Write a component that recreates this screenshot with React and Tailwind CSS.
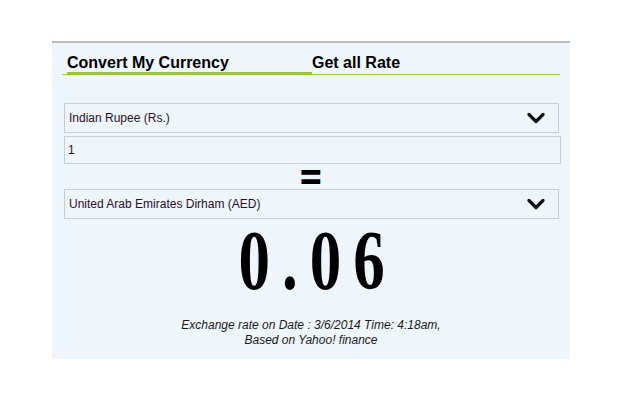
import React from 'react';

function Chevron() {
  return (
    <svg width="18" height="12" viewBox="0 0 18 12" fill="none">
      <path d="M2 2.5 L9 9.5 L16 2.5" stroke="#111" strokeWidth="3.2" strokeLinecap="round" strokeLinejoin="round" />
    </svg>
  );
}

function Select({ label }) {
  return (
    <div className="w-[495px] h-[30px] border border-[#cccccc] bg-[#eef5fb] flex items-center justify-between pl-[4px] pr-[13px]">
      <span className="text-[12px] text-[#2b0f2b]">{label}</span>
      <Chevron />
    </div>
  );
}

export default function App() {
  return (
    <div className="w-[640px] h-[400px] bg-white font-['Liberation_Sans',Arial,sans-serif] pt-[41px]">
      <div className="ml-[52px] w-[518px] h-[318px] border-t-2 border-[#bdbdbd] bg-[#eef5fb]">
        {/* tabs */}
        <div className="mx-[10px] pt-[10px] flex border-b border-[#a6c93a]">
          <div className="ml-[5px] w-[245px] text-[16px] leading-[19px] font-bold text-black border-b-[3px] border-[#9cc43a] -mb-px">
            Convert My Currency
          </div>
          <div className="text-[16px] leading-[19px] font-bold text-black">Get all Rate</div>
        </div>

        {/* form */}
        <div className="px-[12px] pt-[28px] flex flex-col">
          <Select label="Indian Rupee (Rs.)" />
          <div className="mt-[3px] w-[497px] h-[28px] border border-[#cccccc] flex items-center pl-[3px] text-[12px] text-[#2b0f2b]">
            1
          </div>
          <div className="h-[25px] flex items-center justify-center">
            <span className="font-['DejaVu_Sans',sans-serif] font-bold text-[40px] leading-none text-black scale-x-75 -mt-[1px]">=</span>
          </div>
          <Select label="United Arab Emirates Dirham (AED)" />
        </div>

        {/* result */}
        <div className="flex justify-center">
          <div className="font-['Liberation_Serif',serif] font-bold text-[84px] leading-none text-black scale-x-75 tracking-[16px] pl-[16px]">
            0.06
          </div>
        </div>

        <div className="mt-[15px] text-center text-[12px] leading-[15px] italic text-[#1a1a1a]">
          <p>Exchange rate on Date : 3/6/2014 Time: 4:18am,</p>
          <p>Based on Yahoo! finance</p>
        </div>
      </div>
    </div>
  );
}
